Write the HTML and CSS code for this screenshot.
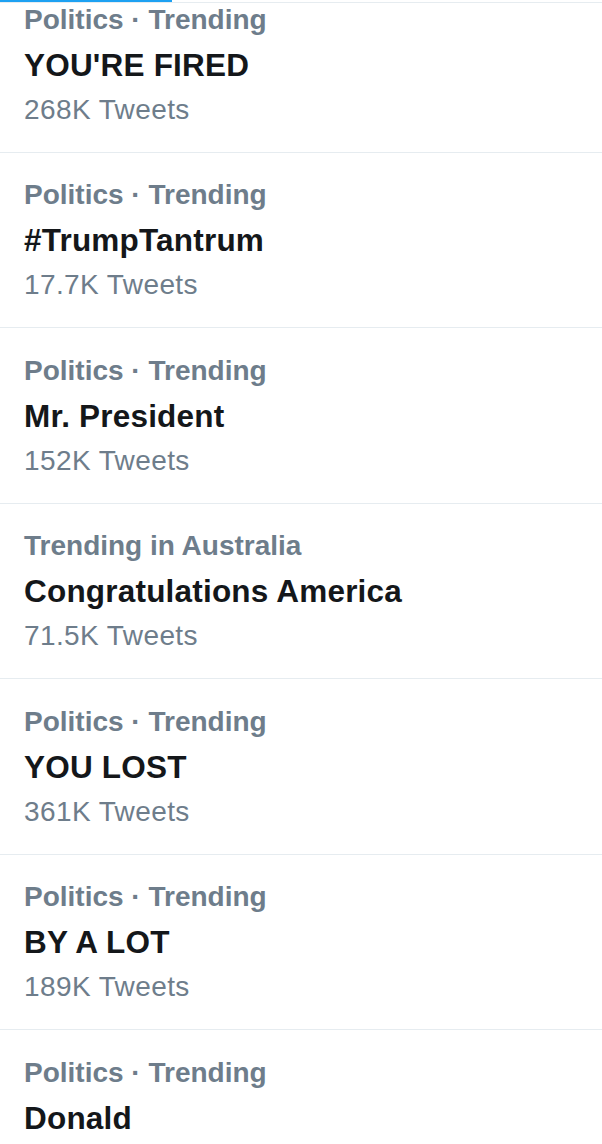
FILE: index.html
```html
<!DOCTYPE html>
<html lang="en">
<head>
    <meta charset="UTF-8">
    <meta name="viewport" content="width=device-width, initial-scale=1.0">
    <title>Trends</title>
    <link rel="stylesheet" href="styles.css">
</head>
<body>

<div class="trends-page">
    <!-- Tab bar underline, only its bottom edge is visible -->
    <div class="tab-edge">
        <div class="tab-indicator"></div>
    </div>

    <!-- Trend list -->
    <ul class="trend-list">
        <li class="trend-item">
            <div class="trend-context">Politics · Trending</div>
            <div class="trend-name">YOU'RE FIRED</div>
            <div class="trend-count">268K Tweets</div>
        </li>
        <li class="trend-item">
            <div class="trend-context">Politics · Trending</div>
            <div class="trend-name">#TrumpTantrum</div>
            <div class="trend-count">17.7K Tweets</div>
        </li>
        <li class="trend-item">
            <div class="trend-context">Politics · Trending</div>
            <div class="trend-name">Mr. President</div>
            <div class="trend-count">152K Tweets</div>
        </li>
        <li class="trend-item">
            <div class="trend-context">Trending in Australia</div>
            <div class="trend-name">Congratulations America</div>
            <div class="trend-count">71.5K Tweets</div>
        </li>
        <li class="trend-item">
            <div class="trend-context">Politics · Trending</div>
            <div class="trend-name">YOU LOST</div>
            <div class="trend-count">361K Tweets</div>
        </li>
        <li class="trend-item">
            <div class="trend-context">Politics · Trending</div>
            <div class="trend-name">BY A LOT</div>
            <div class="trend-count">189K Tweets</div>
        </li>
        <li class="trend-item">
            <div class="trend-context">Politics · Trending</div>
            <div class="trend-name">Donald</div>
        </li>
    </ul>
</div>

</body>
</html>
```

FILE: styles.css
```css
/* Page base */
html, body {
    margin: 0;
    padding: 0;
    background-color: #ffffff;
    overflow: hidden;
}
.trends-page {
    position: relative;
    width: 602px;
    height: 1144px;
    overflow: hidden;
    font-family: "Liberation Sans", Arial, sans-serif;
}
/* Tab bar edge at the very top */
.tab-edge {
    position: absolute;
    top: 0;
    left: 0;
    right: 0;
    height: 2px;
    border-bottom: 1px solid #e6ecf0;
    z-index: 2;
}
.tab-indicator {
    width: 172px;
    height: 2px;
    background-color: #1da1f2;
}
/* Trend list */
.trend-list {
    list-style: none;
    margin: -23px 0 0;
    padding: 0;
}
.trend-item {
    padding: 21.5px 24px 21px;
    border-bottom: 1px solid #e6ecf0;
}
.trend-context {
    font-size: 28px;
    line-height: 42px;
    font-weight: 700;
    color: #6e7d8b;
}
.trend-name {
    font-size: 31.5px;
    line-height: 48px;
    font-weight: 700;
    letter-spacing: 0.2px;
    color: #14171a;
}
.trend-count {
    font-size: 28px;
    line-height: 42px;
    letter-spacing: 0.4px;
    color: #6e7d8b;
}
```
